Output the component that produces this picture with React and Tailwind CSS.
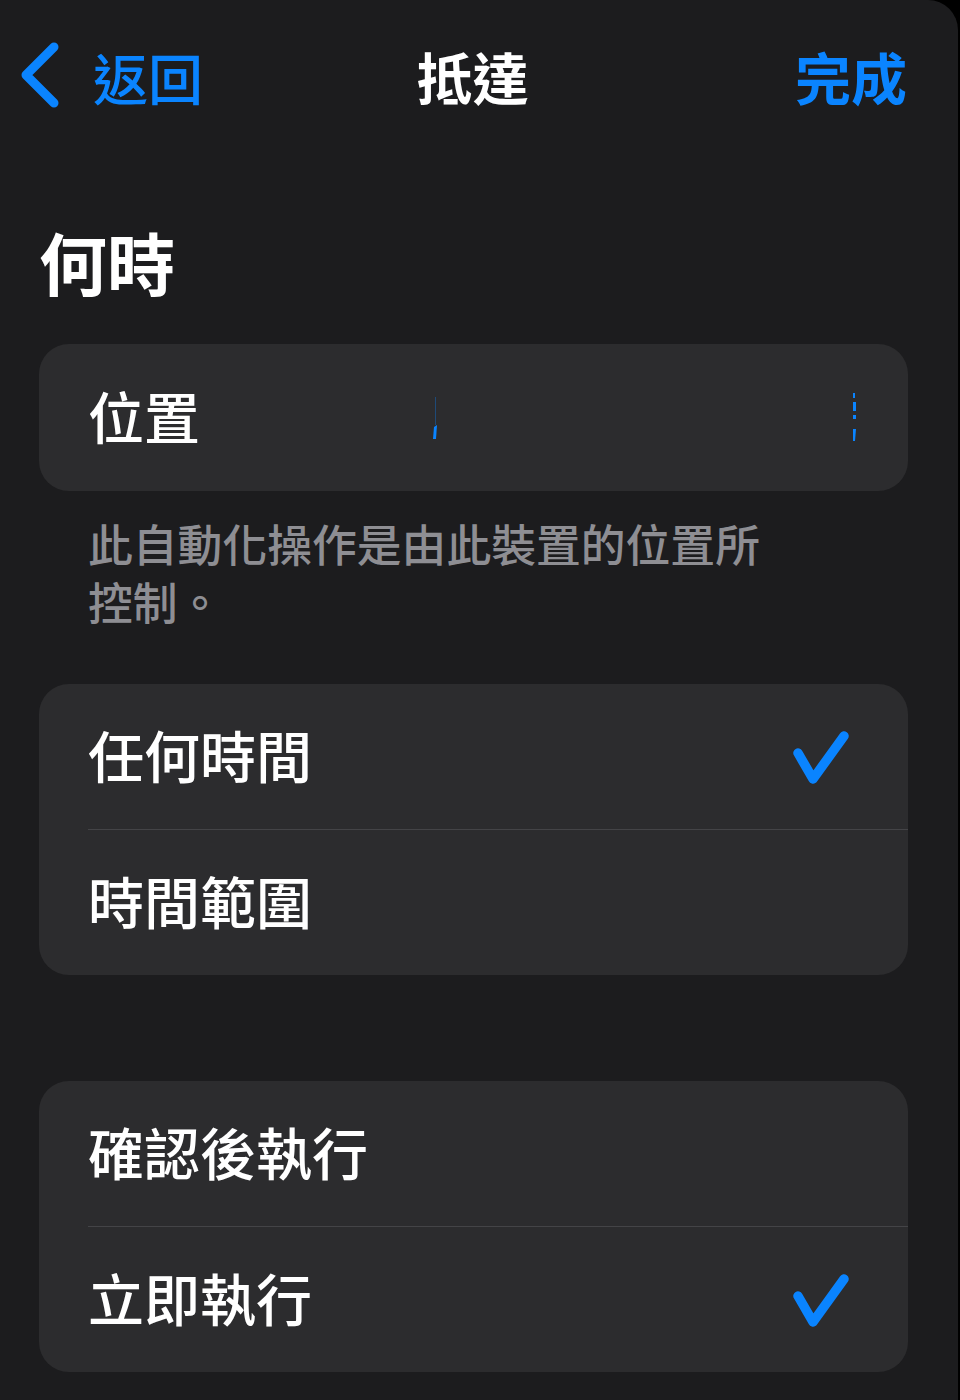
import React from "react";

const font = { fontFamily: '"Noto Sans CJK TC", "Noto Sans", sans-serif' };

const Check = () => (
  <svg className="mt-[8px]" width="58" height="56" viewBox="0 0 58 56" fill="none">
    <path
      d="M6 23 L21 49 L52 6"
      stroke="#0a84ff"
      strokeWidth="9.5"
      strokeLinecap="round"
      strokeLinejoin="round"
    />
  </svg>
);

const Row = ({ label, checked }) => (
  <div className="flex items-center justify-between h-[145px] pb-[5px] pl-[49px] pr-[58px]">
    <span className="text-[56px] leading-none font-medium text-white">{label}</span>
    {checked && <Check />}
  </div>
);

const Group = ({ rows }) => (
  <div className="bg-[#2c2c2e] rounded-[30px] overflow-hidden">
    {rows.map((r, i) => (
      <React.Fragment key={r.label}>
        {i > 0 && <div className="ml-[49px] h-px bg-[#444447]" />}
        <Row label={r.label} checked={r.checked} />
      </React.Fragment>
    ))}
  </div>
);

export default function App() {
  return (
    <div className="bg-black min-h-[1400px]" style={font}>
      <div className="w-[958px] min-h-[1400px] bg-[#1c1c1e] rounded-tr-[30px] overflow-hidden">
        {/* nav bar */}
        <div className="grid grid-cols-[1fr_auto_1fr] items-center h-[158px] pb-[6px] w-[945px]">
          <div className="flex items-center pl-[18px]">
            <svg width="44" height="68" viewBox="0 0 44 68" fill="none">
              <path
                d="M36 5 L8 33 L36 61"
                stroke="#0a84ff"
                strokeWidth="9"
                strokeLinecap="round"
                strokeLinejoin="round"
              />
            </svg>
            <span className="ml-[31px] text-[55px] leading-none font-medium text-[#0a84ff]">返回</span>
          </div>
          <span className="text-[56px] leading-none font-bold text-white">抵達</span>
          <div className="flex justify-end pr-[38px]">
            <span className="text-[56px] leading-none font-bold text-[#0a84ff]">完成</span>
          </div>
        </div>

        <div className="px-[39px] pr-[50px]">
          <h1 className="mt-[68px] text-[68px] leading-[72px] font-bold text-white">何時</h1>

          {/* location card */}
          <div className="mt-[46px] bg-[#2c2c2e] rounded-[30px] h-[147px] flex items-center pb-[5px] pl-[49px] pr-[50px]">
            <span className="text-[56px] leading-none font-medium text-white">位置</span>
            <div className="flex-1 flex items-center justify-between pl-[231px] pt-[5px]">
              <svg width="8" height="46" viewBox="0 0 8 46">
                <rect x="4" y="2" width="1" height="28" fill="#0a84ff" opacity="0.35" />
                <path d="M3 32 L6 30 L5 44 L2 44 Z" fill="#0a84ff" />
              </svg>
              <svg width="8" height="50" viewBox="0 0 8 50">
                <rect x="3" y="0" width="2" height="5" fill="#0a84ff" />
                <rect x="3" y="9" width="3" height="9" fill="#0a84ff" />
                <rect x="3" y="22" width="3" height="4" fill="#0a84ff" />
                <path d="M3 36 L6 36 L5 48 L3 48 Z" fill="#0a84ff" />
              </svg>
            </div>
          </div>

          <p className="mt-[23px] pl-[49px] pr-[130px] text-[44.8px] leading-[58px] font-medium text-[#8e8e93]">
            此自動化操作是由此裝置的位置所控制。
          </p>

          <div className="mt-[54px]">
            <Group
              rows={[
                { label: "任何時間", checked: true },
                { label: "時間範圍", checked: false },
              ]}
            />
          </div>

          <div className="mt-[106px]">
            <Group
              rows={[
                { label: "確認後執行", checked: false },
                { label: "立即執行", checked: true },
              ]}
            />
          </div>
        </div>
      </div>
    </div>
  );
}
